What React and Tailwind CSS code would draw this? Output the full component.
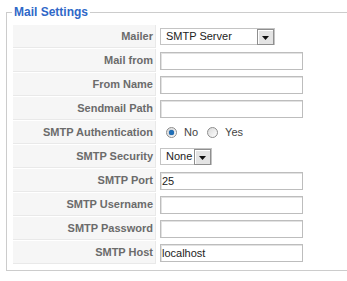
import React from 'react';

const rows = [
  { label: 'Mailer', kind: 'select', value: 'SMTP Server', width: 'w-[115px]' },
  { label: 'Mail from', kind: 'text', value: '' },
  { label: 'From Name', kind: 'text', value: '' },
  { label: 'Sendmail Path', kind: 'text', value: '' },
  { label: 'SMTP Authentication', kind: 'radio' },
  { label: 'SMTP Security', kind: 'select', value: 'None', width: 'w-[52px]' },
  { label: 'SMTP Port', kind: 'text', value: '25' },
  { label: 'SMTP Username', kind: 'text', value: '' },
  { label: 'SMTP Password', kind: 'text', value: '' },
  { label: 'SMTP Host', kind: 'text', value: 'localhost' },
];

function DropButton() {
  return (
    <span className="flex h-[16px] w-[17px] items-center justify-center border border-[#8f8f8f] bg-[#e4e4e4] shadow-[inset_1px_1px_0_#ffffff]">
      <svg width="7" height="4" viewBox="0 0 7 4" className="mt-[3px]">
        <path d="M0 0h7L3.5 4z" fill="#111" />
      </svg>
    </span>
  );
}

function FakeSelect({ value, width }) {
  return (
    <div className={`flex h-[17px] ${width} items-center border border-[#c4c4c4] bg-white pl-[5px] text-[11px] text-[#222]`}>
      <span className="flex-1 leading-none">{value}</span>
      <DropButton />
    </div>
  );
}

function Radio({ checked }) {
  return (
    <span className="flex h-[11px] w-[11px] items-center justify-center rounded-full border border-[#8d8d8d] bg-gradient-to-br from-[#d9d9d9] to-[#ffffff]">
      {checked && <span className="h-[5px] w-[5px] rounded-full bg-[#1f6fb8] shadow-[0_0_1px_#0b3f7a]" />}
    </span>
  );
}

function Field({ row }) {
  if (row.kind === 'select') return <FakeSelect value={row.value} width={row.width} />;
  if (row.kind === 'radio') {
    return (
      <div className="flex items-center pl-[6px] text-[11px] text-[#444]">
        <Radio checked />
        <span className="ml-[7px]">No</span>
        <span className="ml-[9px]"><Radio /></span>
        <span className="ml-[7px]">Yes</span>
      </div>
    );
  }
  return (
    <input
      type="text"
      defaultValue={row.value}
      className="block h-[18px] w-[143px] border border-[#bdbdbd] bg-white px-[1px] text-[11px] text-[#222] shadow-[inset_1px_1px_0_#e2e2e2] outline-none"
    />
  );
}

export default function App() {
  return (
    <div className="h-[281px] w-[347px] overflow-hidden bg-white font-['Liberation_Sans',Arial,sans-serif]">
      <fieldset className="ml-[6px] mt-[5px] w-[400px] border border-[#cccccc] p-[5px]">
        <legend className="px-[2px] text-[12px] font-bold leading-[14px] text-[#2f68c8]">Mail Settings</legend>
        <table className="border-separate border-spacing-[1px]">
          <tbody>
            {rows.map((row) => (
              <tr key={row.label}>
                <td className="h-[23px] w-[143px] border-b border-r border-[#e9e9e9] bg-[#f6f6f6] pr-[2px] text-right align-middle text-[11px] font-bold text-[#6b6b6b]">
                  {row.label}
                </td>
                <td className="h-[23px] pl-[3px] align-middle">
                  <Field row={row} />
                </td>
              </tr>
            ))}
          </tbody>
        </table>
      </fieldset>
    </div>
  );
}
